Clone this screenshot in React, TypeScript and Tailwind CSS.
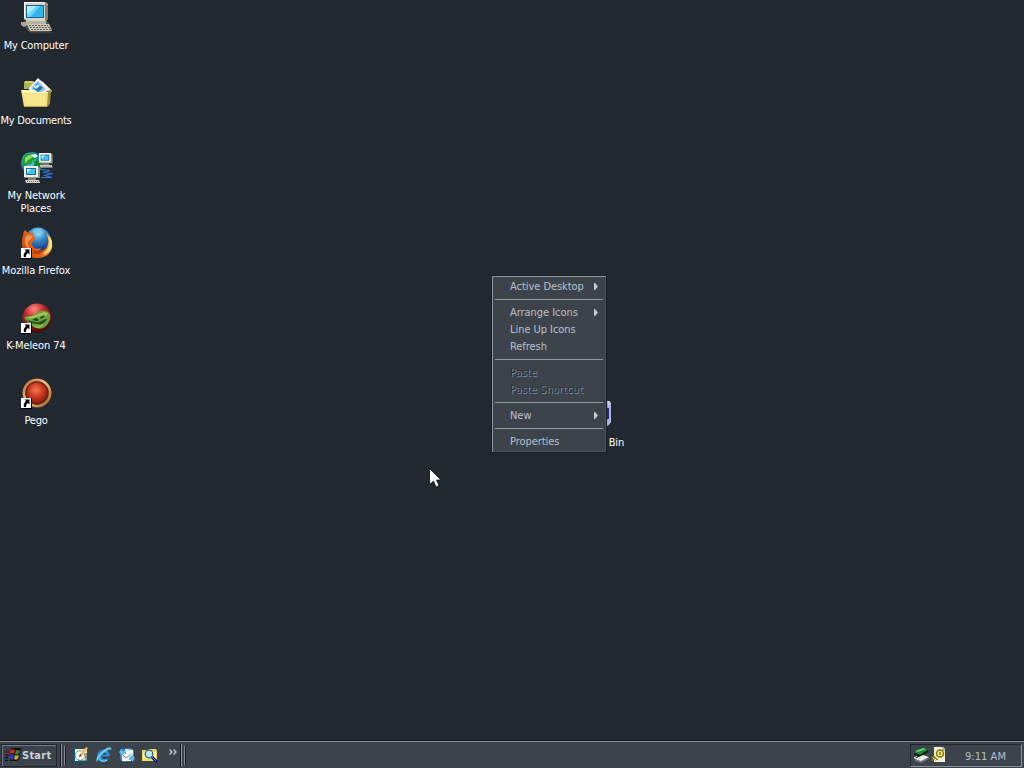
import type { ReactNode } from 'react';

const DeskIcon = ({ children }: { children: ReactNode }) => (
  <svg viewBox="0 0 32 32" className="block h-8 w-8 shrink-0">{children}</svg>
);

const ShortcutArrow = () => (
  <g>
    <rect x="0" y="21" width="11" height="11" fill="#000" />
    <rect x="0" y="21" width="10" height="10" fill="#fff" />
    <path d="M3.500 22.500H8.500V27.500L7 26C5.500 27 5 28 5 30H3C2 27.500 3.500 25.500 5 24z" fill="#000" />
  </g>
);

const MyComputer = () => (
  <DeskIcon>
    <path d="M1 21l4-3h21l5 9-3 3H8z" fill="#55554d" />
    <path d="M0 20h8v2l-5 3-3-2z" fill="#aaa89a" />
    <path d="M5 18h20v4H5z" fill="#b8b4a2" />
    <path d="M3 0h21l3 2v15l-3 2H6l-3-2z" fill="#d8d3c2" />
    <path d="M24 1l3 2v14l-3 2z" fill="#817d71" />
    <path d="M3 0h20v1H4v15H3z" fill="#fffdf0" />
    <path d="M5 3h18v13H5z" fill="#1262a6" />
    <path d="M6 4h16v11H6z" fill="#31b5ef" />
    <path d="M6 4h10L6 13z" fill="#b0efff" />
    <path d="M16 4h3L9 15H6v-2z" fill="#6fd8fb" />
    <path d="M6 22h22l3 7H9z" fill="#cbc7b8" />
    <path d="M8 23.500h19M9 25.500h20M10 27.500h20" stroke="#65625a" strokeDasharray="2 1" />
    <path d="M9 30h22v1H10z" fill="#46443e" />
  </DeskIcon>
);

const MyDocuments = () => (
  <DeskIcon>
    <path d="M3 6l1-2h8l3 3v5H3z" fill="#d9cf55" />
    <path d="M3 6h10v6H3z" fill="#a3b84d" />
    <path d="M17 1l13 12-3 3v4H8v-9z" fill="#eef6fc" />
    <path d="M17 4l8 8-8 7-7-8z" fill="#8fcaf0" />
    <path d="M16 6l6 5-5 4-5-4z" fill="#2a6dab" />
    <path d="M12 10l5-3 2 2-4 3z" fill="#c4e9fa" />
    <path d="M21 4l10 10-2 2-8-8z" fill="#f4f4ef" />
    <path d="M25 14l5-1-1 14-3 3z" fill="#a48a32" />
    <path d="M0 13h14l2 2h11l-1 15H3z" fill="#f1df80" />
    <path d="M1 13h12l2 2h11v1H2z" fill="#fff7bd" />
    <path d="M3 17h22l-1 11H4z" fill="#f7e88d" />
    <path d="M3 29h23v1H3z" fill="#c2a947" />
  </DeskIcon>
);

const Monitor = () => (
  <g>
    <path d="M0 0h14l2 2v10H1L0 11z" fill="#8d9690" />
    <path d="M0 0h14v11H0z" fill="#f1eedb" />
    <path d="M2 2h10v7H2z" fill="#146a9e" />
    <path d="M3 3h8v5H3z" fill="#45c1f1" />
    <path d="M3 3h4L3 7z" fill="#c6f6ff" />
    <path d="M4 12h8v2H4z" fill="#858477" />
    <path d="M1 14h14l1 3H2z" fill="#d6d2c1" />
    <path d="M3 15.500h11" stroke="#6d6b61" strokeDasharray="1 1" />
  </g>
);

const NetworkPlaces = () => (
  <DeskIcon>
    <circle cx="11" cy="11" r="11" fill="#1685bb" />
    <circle cx="8" cy="8" r="7" fill="#44bce0" />
    <path d="M1 7l4-5 7-1 5 4-4 3-3 4-5 1 1 5-4-3z" fill="#299c39" />
    <path d="M4 6l4-3 4 2-5 3-3 4z" fill="#8de05c" />
    <path d="M13 9l5-1 3 4-2 6h-5z" fill="#20802e" />
    <path d="M9 3l5-1 3 2-3 2z" fill="#e2f8e8" />
    <g transform="translate(18 1) scale(.85)"><Monitor /></g>
    <path d="M20 17.500l9 1-7 2 10 1-8 2 7 2H20" fill="none" stroke="#3275d5" strokeWidth="1.200" />
    <g transform="translate(3 14)"><Monitor /></g>
  </DeskIcon>
);

const Firefox = () => (
  <DeskIcon>
    <defs>
      <radialGradient id="ffGlobe" cx=".5" cy=".2" r=".75">
        <stop offset="0" stopColor="#a6e8ff" />
        <stop offset=".4" stopColor="#3b8bcd" />
        <stop offset="1" stopColor="#0b2a76" />
      </radialGradient>
      <linearGradient id="ffTail" x1="0" y1=".7" x2="1" y2=".3">
        <stop offset="0" stopColor="#cc4a12" />
        <stop offset=".5" stopColor="#e96a10" />
        <stop offset="1" stopColor="#ffd95c" />
      </linearGradient>
    </defs>
    <circle cx="17" cy="13.500" r="13" fill="url(#ffGlobe)" />
    <path d="M12 4l6-2 5 3-3 2-4-1-2 2z" fill="#79c6eb" />
    <path d="M2 9C2 6 3 4 4 3l3 3c2-1 4 0 6 0l-2 3 4 2c-1 3-4 3-4 5 0 5 5 7 9 5-1 3-4 4-7 4 7 2 13-2 14-8 1-4 0-7-2-11 5 4 7 10 6 15-2 7-8 10-15 10C7 31 1 25 1 16c0-3 0-5 1-7z" fill="url(#ffTail)" />
    <path d="M5 9l3-1 4 1-2 3c-4 2-4 7 0 11-5-2-8-9-5-14z" fill="#ef9450" />
    <path d="M12 22c3 3 8 3 12-1-2 6-8 8-12 5z" fill="#b9400f" />
    <path d="M28 9c2 7 0 14-6 18 6-1 9-5 9-11 0-3-1-5-3-7z" fill="#ffe88a" />
    <ShortcutArrow />
  </DeskIcon>
);

const KMeleon = () => (
  <DeskIcon>
    <defs>
      <radialGradient id="kmBall" cx=".4" cy=".2" r=".85">
        <stop offset="0" stopColor="#ff8a82" />
        <stop offset=".4" stopColor="#bd2527" />
        <stop offset="1" stopColor="#390508" />
      </radialGradient>
    </defs>
    <circle cx="16" cy="16" r="14.500" fill="url(#kmBall)" />
    <path d="M3 15c7 0 11-3 17-6 4-1 7 0 9 3 1 5-1 9-4 12-4 4-9 3-13 0-4-2-7-5-9-9z" fill="#69a33a" />
    <path d="M5 15c7 0 13-4 19-5 3 1 3 3 1 4-5 2-8-1-12 2-3 1-6 0-8-1z" fill="#9bc954" />
    <path d="M6 18c6 1 8 3 12 2 3-1 5-3 8-3-2 4-5 6-9 5-4 0-8-1-11-4z" fill="#284c1c" />
    <path d="M11 18l4-2 3 2-2 1zM19 15l5-2-1 2-3 2z" fill="#223d19" />
    <path d="M10 23c5 2 9 1 13-1-3 5-8 5-13 1z" fill="#8ebc4e" />
    <ShortcutArrow />
  </DeskIcon>
);

const Pego = () => (
  <DeskIcon>
    <defs>
      <radialGradient id="pegoGem" cx=".45" cy=".38" r=".65">
        <stop offset="0" stopColor="#f07a55" />
        <stop offset=".5" stopColor="#d03c24" />
        <stop offset="1" stopColor="#921d0d" />
      </radialGradient>
      <linearGradient id="pegoRim" x1="0" y1="0" x2="1" y2="1">
        <stop offset="0" stopColor="#b76d36" />
        <stop offset=".45" stopColor="#f0c787" />
        <stop offset="1" stopColor="#a3612e" />
      </linearGradient>
    </defs>
    <circle cx="16" cy="16" r="14.500" fill="#9c5a2c" />
    <circle cx="16" cy="16" r="13" fill="none" stroke="url(#pegoRim)" strokeWidth="2.500" />
    <circle cx="16" cy="16" r="11.700" fill="#6a2411" />
    <circle cx="16" cy="15.500" r="10" fill="url(#pegoGem)" />
    <ShortcutArrow />
  </DeskIcon>
);

const shortcuts: { icon: ReactNode; lines: { text: string; cls: string }[] }[] = [
  { icon: <MyComputer />, lines: [{ text: 'My Computer', cls: 'tracking-[-0.2px]' }] },
  { icon: <MyDocuments />, lines: [{ text: 'My Documents', cls: 'tracking-[-0.25px]' }] },
  { icon: <NetworkPlaces />, lines: [{ text: 'My Network', cls: 'tracking-[-0.1px] pl-px' }, { text: 'Places', cls: 'tracking-[-0.1px]' }] },
  { icon: <Firefox />, lines: [{ text: 'Mozilla Firefox', cls: 'tracking-[-0.1px]' }] },
  { icon: <KMeleon />, lines: [{ text: 'K-Meleon 74', cls: 'tracking-[-0.1px]' }] },
  { icon: <Pego />, lines: [{ text: 'Pego', cls: '' }] },
];

const Separator = () => (
  <div className="flex h-[9px] items-center pl-0.5 pr-0.5">
    <div className="h-px w-full bg-[#949ba5]" />
  </div>
);

const MenuItem = ({ text, arrow, disabled }: { text: string; arrow?: boolean; disabled?: boolean }) => (
  <div
    className={`flex h-[17px] items-center justify-between pr-[7px] ${
      disabled
        ? 'pl-[17px] text-[#2b3037] tracking-[0.05px] [text-shadow:1px_1px_0_#858c96]'
        : 'pl-[17px] text-[#b9c0cc] tracking-[-0.05px]'
    }`}
  >
    <span>{text}</span>
    {arrow && (
      <svg viewBox="0 0 4 7" className="h-[7px] w-1"><path d="M0 0h1l3 3.500L1 7H0z" fill="#c3cad5" /></svg>
    )}
  </div>
);

const TaskIcon = ({ children }: { children: ReactNode }) => (
  <svg viewBox="0 0 16 16" className="block h-4 w-4 shrink-0">{children}</svg>
);

const BandGrip = () => (
  <div className="flex h-[23px] shrink-0 items-center gap-0.5">
    <div className="h-full w-0.5 border-l border-[#15191e] bg-[#8a919b]" />
    <div className="h-[19px] w-0.5 border-r border-[#171b20] bg-[#858c96]" />
  </div>
);

const Taskbar = () => (
  <footer className="flex h-7 shrink-0 items-center border-t border-[#15191e] bg-[#3c434b] shadow-[inset_0_1px_0_#87909b]">
    <div className="mt-px ml-px flex h-[23px] w-[56px] items-center gap-px border border-[#20252b] pl-[3px] shadow-[inset_1px_1px_0_#737b86]">
      <TaskIcon>
        <path d="M6 2c3-2 5 0 10-1l-2 12c-4 2-7 0-10 1z" fill="#0d0c10" />
        <path d="M6 3c2-1 3-1 4 0L9 7c-1-1-3-1-4 0z" fill="#d13022" />
        <path d="M11 3c2 1 3 0 4 0l-1 4c-2 1-3 0-4 0z" fill="#3f8428" />
        <path d="M5 8c2-1 3-1 4 0l-1 5c-1-1-3-1-4 0z" fill="#2b44b8" />
        <path d="M10 8c2 1 3 0 4 0l-1 4c-2 1-3 1-4 0z" fill="#cfa826" />
        <path d="M1 4h3M0 6.500h4" stroke="#a02222" />
        <path d="M1 9h2M0 12h3" stroke="#222c9a" />
        <path d="M1 5h3M0 8h4M0 10.500h3M0 13.500h3" stroke="#0c0e20" />
      </TaskIcon>
      <span className="text-[11px] font-bold leading-[13px] tracking-[0.25px] text-[#cbd2dc]">Start</span>
    </div>
    <div className="mt-px ml-[3px] flex h-[23px] items-center">
      <BandGrip />
      <div className="ml-[7px] flex items-center gap-[7px]">
        <TaskIcon>
          <path d="M0 1h15v15H0z" fill="#0b5770" />
          <path d="M2 2h12v12H2z" fill="#f0ead2" />
          <circle cx="7" cy="8.500" r="4.700" fill="#fff" stroke="#8e9b8e" />
          <path d="M6 10l1-3 6-7 2 1-6 8z" fill="#f1b750" />
          <path d="M6 10l1-3 1.500 2z" fill="#32281d" />
          <path d="M13 6v8M5 14h9" stroke="#254954" />
        </TaskIcon>
        <TaskIcon>
          <path d="M14 9.500H5.500C6 12.500 9 12.500 13 11.500 11 16 3 17 1.500 11 0 5 5 2 9.500 3 13 4 14 7 14 9.500z" fill="#2b8ed2" />
          <path d="M5.500 7.500h5C10 5 6 5 5.500 7.500z" fill="#303a47" />
          <path d="M1 15C-2 12 5 4 11 1c4-2 5 0 4 3 0-3-2-2-6 1-5 4-8 8-8 10z" fill="#6dcaf2" />
          <path d="M3 11c1 3 5 4 8 2" fill="none" stroke="#93e6ff" />
        </TaskIcon>
        <TaskIcon>
          <path d="M1 2l11-1 3 3v10l-11 1-3-3z" fill="#2f82c4" />
          <path d="M6 2l8 1v6l-8-1z" fill="#eef8ff" />
          <path d="M3 7h9v7H3z" fill="#fff" />
          <path d="M3 7l4 4 5-4" fill="none" stroke="#4a8cc4" />
          <path d="M0 5l3-3v2h4v3H3v2zM16 11l-3-3v2h-3v3h3v2z" fill="#61bdf0" />
        </TaskIcon>
        <TaskIcon>
          <path d="M0 3h6l1-1h7l1 2v10H0z" fill="#ebd861" />
          <path d="M1 5h13v7H1z" fill="#fff29a" />
          <circle cx="7" cy="7" r="3.800" fill="#b4e9f3" stroke="#376078" strokeWidth="1.300" />
          <path d="M10 10l5 5" stroke="#101a71" strokeWidth="3" />
          <path d="M10 10l4 4" stroke="#4c75d7" />
        </TaskIcon>
      </div>
      <svg viewBox="0 0 8 6" className="mb-[7px] ml-[11px] h-[6px] w-2">
        <path d="M.5.5L3 3 .5 5.500M4.500.5L7 3 4.500 5.500" fill="none" stroke="#d2d8e1" strokeWidth="1.200" />
      </svg>
      <div className="ml-[3px]"><BandGrip /></div>
    </div>
    <div className="mt-px mr-0.5 ml-auto flex h-[23px] w-[112px] items-center border border-t-[#20252b] border-r-[#89919c] border-b-[#89919c] border-l-[#20252b] pl-0.5">
      <TaskIcon>
        <path d="M1 5l9-4 5 2-8 5z" fill="#178a36" />
        <path d="M2 4l8-3 3 1-8 3z" fill="#63d26b" />
        <path d="M1 6l6 2 8-5v2L7 10 1 8z" fill="#06150c" />
        <path d="M2 12l8-4 6 2-8 5z" fill="#eceee9" />
        <path d="M2 12l6 2 8-4v2l-8 4-6-2z" fill="#70766f" />
        <path d="M4 9l-3 2 5 1" fill="none" stroke="#dfe4df" />
      </TaskIcon>
      <svg viewBox="0 0 16 16" className="ml-0.5 block h-4 w-4">
        <path d="M3 0h9l2 2v13H3z" fill="#f1efd9" />
        <path d="M12 0v3h2" fill="none" stroke="#8d8c79" />
        <circle cx="9" cy="6.500" r="3.500" fill="#f6e968" stroke="#817412" strokeWidth="1.500" />
        <path d="M9 5v3M4 10l-3 4M2 9l5 4" stroke="#847515" strokeWidth="1.500" />
        <path d="M1 10l4 4" stroke="#e7d338" />
      </svg>
      <span className="ml-[18px] pt-0.5 text-[11px] leading-[13px] tracking-[0.05px] text-[#b7bfca]">9:11 AM</span>
    </div>
  </footer>
);

export default function App() {
  return (
    <div className="flex h-[768px] w-[1024px] flex-col overflow-hidden bg-[#212830] font-['DejaVu_Sans_Condensed','DejaVu_Sans',sans-serif] text-[11px] leading-[13px] tracking-[-0.2px]">
      <main className="relative flex-1">
        <div className="flex w-[74px] flex-col pt-0.5">
          {shortcuts.map(({ icon, lines }) => (
            <div key={lines[0].text} className="flex h-[75px] flex-col items-center gap-[5px]">
              {icon}
              <div className="flex flex-col items-center pr-0.5 whitespace-nowrap text-white">
                {lines.map((l) => <span key={l.text} className={l.cls}>{l.text}</span>)}
              </div>
            </div>
          ))}
        </div>

        <div className="absolute top-[398px] left-[579px] flex w-[45px] flex-col items-end text-white">
          <svg viewBox="0 0 32 32" className="mr-[13px] h-8 w-8">
            <path d="M4 5l12-4 14 2 2 3-1 19-3 3-7 2-14-2z" fill="#8a8fc0" />
            <path d="M29 4l3 2v18l-2 3-2 1z" fill="#aeb2e0" />
            <path d="M28 10h2v11h-2z" fill="#22277a" />
            <path d="M28 3h3l1 3-3 2z" fill="#c9cbd6" />
          </svg>
          <span className="mt-[6px]">Bin</span>
        </div>

        <div className="absolute top-[275px] left-[491px] h-[178px] w-[116px] border border-[#1a1e24] bg-[#3c434b] shadow-[inset_1px_1px_0_#8f96a0,inset_-1px_-1px_0_#4b525c]">
          <div className="flex flex-col pt-0.5 pr-px pl-px whitespace-nowrap">
            <MenuItem text="Active Desktop" arrow />
            <Separator />
            <MenuItem text="Arrange Icons" arrow />
            <MenuItem text="Line Up Icons" />
            <MenuItem text="Refresh" />
            <Separator />
            <MenuItem text="Paste" disabled />
            <MenuItem text="Paste Shortcut" disabled />
            <Separator />
            <MenuItem text="New" arrow />
            <Separator />
            <MenuItem text="Properties" />
          </div>
        </div>

        <svg viewBox="0 0 12 20" className="absolute top-[468px] left-[429px] h-5 w-3">
          <path d="M.5.5v16l4-3.500 2.500 6 3-1.500-2.500-5.500H12z" fill="#fff" stroke="#0a0c0f" strokeWidth=".8" />
        </svg>
      </main>
      <Taskbar />
    </div>
  );
}
